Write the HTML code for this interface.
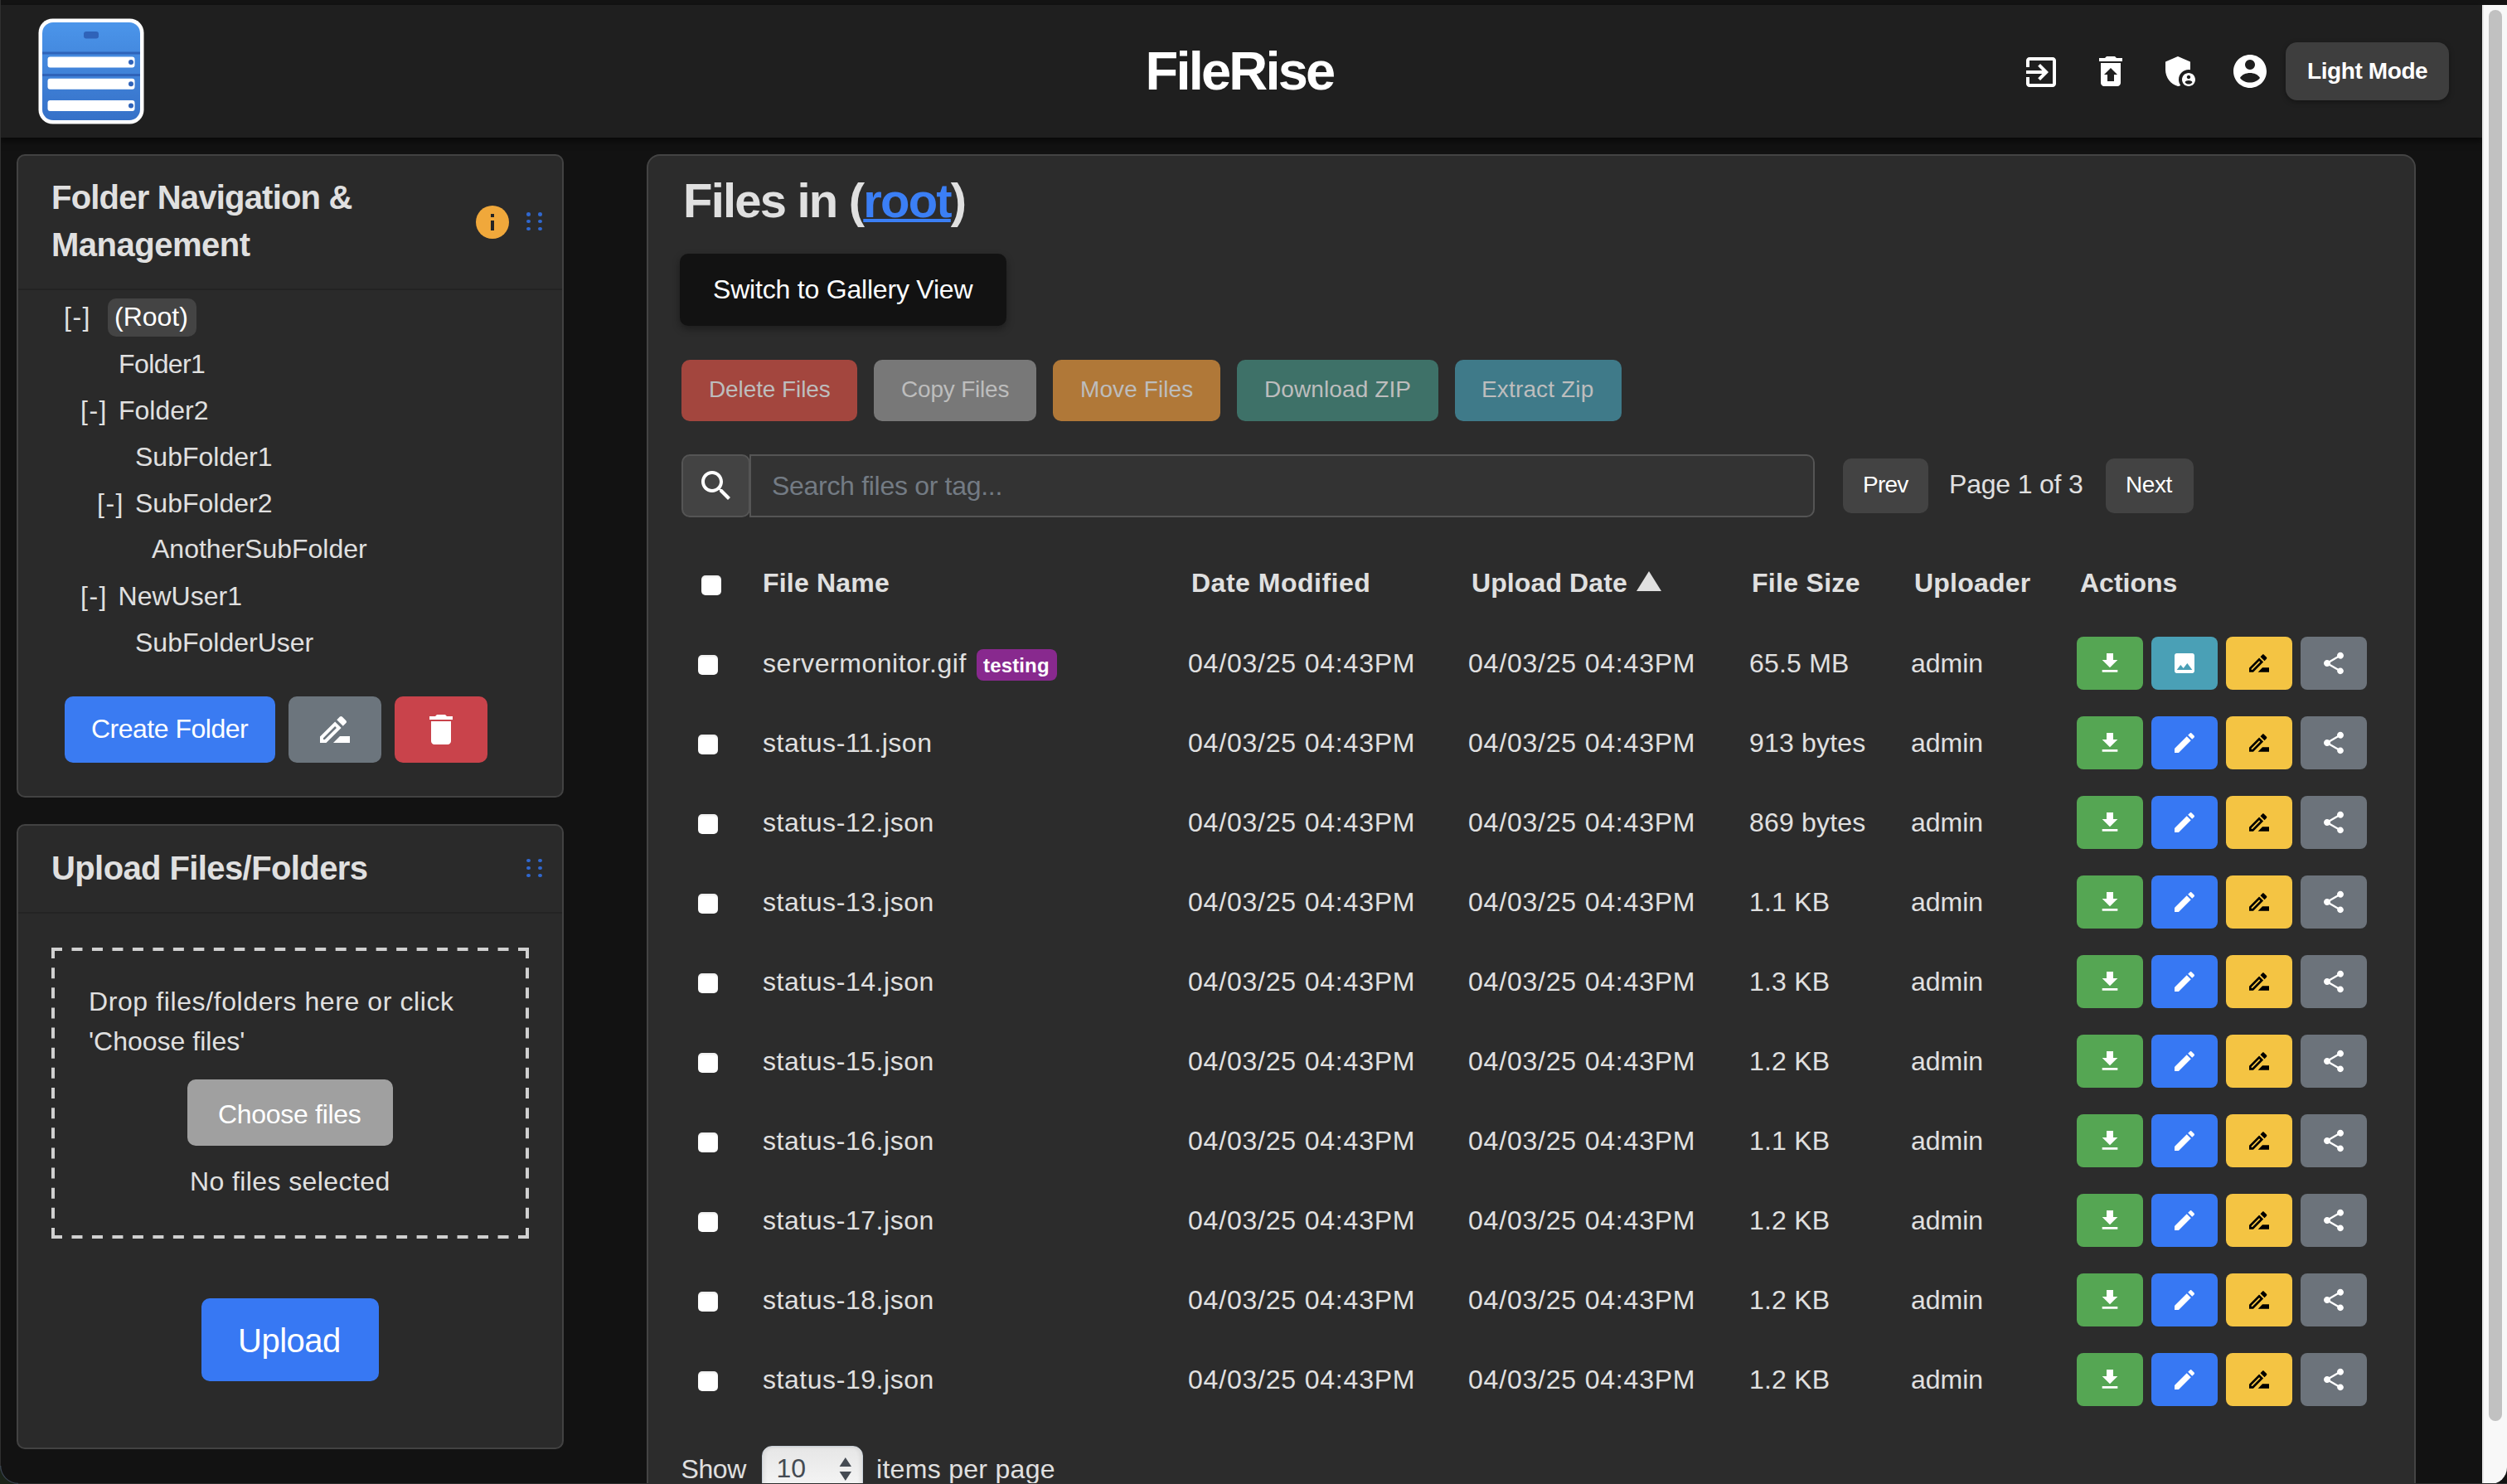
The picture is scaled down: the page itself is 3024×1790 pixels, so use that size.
<!DOCTYPE html>
<html><head><meta charset="utf-8"><title>FileRise</title>
<style>
html,body{margin:0;padding:0;}
body{width:3024px;height:1790px;overflow:hidden;position:relative;background:#121212;font-family:"Liberation Sans",sans-serif;color:#e0e0e0;}
.t{position:absolute;line-height:1;white-space:pre;}
.r{position:absolute;}
</style></head><body>
<div class="r" style="left:0.0px;top:0.0px;width:3024.0px;height:6.0px;background:#141414;"></div>
<div class="r" style="left:0.0px;top:6.0px;width:2994.0px;height:160.0px;background:#1f1f1f;box-shadow:0 4px 8px rgba(0,0,0,.6);z-index:2"></div>
<div class="r" style="left:0.0px;top:0.0px;width:1.0px;height:1790.0px;background:#303030;z-index:5"></div>
<svg class="r" style="left:46px;top:22px;width:128px;height:128px;z-index:3" viewBox="0 0 128 128">
<defs><linearGradient id="lg" x1="0" y1="0" x2="0" y2="1"><stop offset="0" stop-color="#4b95ea"/><stop offset="1" stop-color="#3671c8"/></linearGradient></defs>
<rect x="0.5" y="0.5" width="127" height="127" rx="17" fill="#fff"/>
<rect x="5" y="5" width="118" height="118" rx="13" fill="url(#lg)"/>
<rect x="55" y="16" width="18" height="8.5" rx="3" fill="#2f63b9"/>
<rect x="5" y="40.5" width="118" height="3" fill="#2f63b9"/>
<rect x="5" y="67" width="118" height="3" fill="#2f63b9"/>
<rect x="11.5" y="46.5" width="105" height="13" rx="3" fill="#fff"/>
<rect x="11.5" y="72.7" width="105" height="13" rx="3" fill="#fff"/>
<rect x="11.5" y="99" width="105" height="13" rx="3" fill="#fff"/>
<circle cx="112" cy="53" r="3" fill="#2f63b9"/><circle cx="112" cy="79.2" r="3" fill="#2f63b9"/><circle cx="112" cy="105.5" r="3" fill="#2f63b9"/>
</svg>
<div class="t" style="left:1381.5px;top:53.4px;font-size:65px;font-weight:700;color:#ffffff;letter-spacing:-2.8px;z-index:3;">FileRise</div>
<svg class="r" style="left:2438px;top:63px;width:48px;height:48px;fill:#fff;z-index:3" viewBox="0 0 24 24"><path d="M10.09 15.59L11.5 17l5-5-5-5-1.41 1.41L12.67 11H3v2h9.67l-2.58 2.59zM19 3H5c-1.11 0-2 .9-2 2v4h2V5h14v14H5v-4H3v4c0 1.1.89 2 2 2h14c1.1 0 2-.9 2-2V5c0-1.1-.9-2-2-2z"/></svg>
<svg class="r" style="left:2522px;top:62px;width:48px;height:48px;fill:#fff;z-index:3" viewBox="0 0 24 24"><path d="M19 4h-3.5l-1-1h-5l-1 1H5v2h14V4zM6 7v12c0 1.1.9 2 2 2h8c1.1 0 2-.9 2-2V7H6zm8 7v4h-4v-4H8l4-4 4 4h-2z"/></svg>
<svg class="r" style="left:2606px;top:62px;width:48px;height:48px;fill:#fff;z-index:3" viewBox="0 0 24 24"><path d="M17,11c0.34,0,0.67,0.04,1,0.09V6.27L10.5,3L3,6.27v4.91c0,4.54,3.2,8.79,7.5,9.82c0.55-0.13,1.08-0.32,1.6-0.55C11.41,19.47,11,18.28,11,17C11,13.69,13.69,11,17,11z"/><path d="M17,13c-2.21,0-4,1.79-4,4c0,2.21,1.79,4,4,4s4-1.79,4-4C21,14.79,19.21,13,17,13z M17,14.38c0.62,0,1.12,0.51,1.12,1.12s-0.51,1.12-1.12,1.12s-1.12-0.51-1.12-1.12S16.38,14.38,17,14.38z M17,19.75c-0.93,0-1.740-0.46-2.24-1.17c0.05-0.72,1.51-1.08,2.24-1.08s2.19,0.36,2.24,1.08C18.74,19.29,17.93,19.75,17,19.75z"/></svg>
<svg class="r" style="left:2690px;top:62px;width:48px;height:48px;fill:#fff;z-index:3" viewBox="0 0 24 24"><path fill-rule="evenodd" d="M12 2C6.48 2 2 6.48 2 12s4.48 10 10 10 10-4.48 10-10S17.520 2 12 2zM12 5a3 3 0 1 0 0.001 0zM6 16c1-2 3.6-3 6-3s5 1 6 3c-1.2 1.7-3.5 2.8-6 2.8S7.2 17.7 6 16z"/></svg>
<div class="r" style="left:2757.0px;top:51.0px;width:197.0px;height:70.0px;background:#3e3e3e;border-radius:14px;box-shadow:0 2px 6px rgba(0,0,0,.35);z-index:3"></div>
<div class="t" style="left:2783.0px;top:71.6px;font-size:28px;font-weight:700;color:#ffffff;letter-spacing:-0.4px;z-index:3;">Light Mode</div>
<div class="r" style="left:2994.0px;top:6.0px;width:30.0px;height:1784.0px;background:#f8f8f8;border-left:2px solid #e8e8e8;box-sizing:border-box;border-bottom-right-radius:20px;z-index:6"></div>
<div class="r" style="left:3002.0px;top:12.0px;width:16.0px;height:1702.0px;background:#c1c1c1;border-radius:8px;z-index:7"></div>
<div class="r" style="left:0.0px;top:1788.5px;width:3024.0px;height:1.5px;background:#2e2e2e;z-index:8"></div>
<svg class="r" style="left:0;top:1768px;width:22px;height:22px;z-index:9" viewBox="0 0 22 22"><path d="M0,0 L0,22 L22,22 A22,22 0 0 1 0,0 Z" fill="#1b2419"/><path d="M22,21.3 A21.3,21.3 0 0 1 0.7,0" fill="none" stroke="#3b4652" stroke-width="1.2"/></svg>
<div class="r" style="left:20.0px;top:186.0px;width:660.0px;height:776.0px;background:#2a2a2a;border-radius:10px;border:2px solid #424242;box-sizing:border-box"></div>
<div class="r" style="left:22.0px;top:348.0px;width:656.0px;height:2.0px;background:#232323;"></div>
<div class="t" style="left:62.0px;top:218.1px;font-size:40px;font-weight:700;letter-spacing:-0.8px;">Folder Navigation &amp;</div>
<div class="t" style="left:62.0px;top:274.7px;font-size:40px;font-weight:700;letter-spacing:-0.5px;">Management</div>
<div class="r" style="left:574px;top:248px;width:40px;height:40px;border-radius:50%;background:#f0a83b"></div>
<div class="r" style="left:592.0px;top:258.0px;width:4.0px;height:4.0px;background:#242424;"></div>
<div class="r" style="left:592.0px;top:266.0px;width:4.0px;height:12.0px;background:#242424;"></div>
<div class="r" style="left:634.5px;top:256.40000000000003px;width:5px;height:4.4px;border-radius:50%;background:#3068cf"></div>
<div class="r" style="left:634.5px;top:265.1px;width:5px;height:4.4px;border-radius:50%;background:#3068cf"></div>
<div class="r" style="left:634.5px;top:273.8px;width:5px;height:4.4px;border-radius:50%;background:#3068cf"></div>
<div class="r" style="left:648.5px;top:256.40000000000003px;width:5px;height:4.4px;border-radius:50%;background:#3068cf"></div>
<div class="r" style="left:648.5px;top:265.1px;width:5px;height:4.4px;border-radius:50%;background:#3068cf"></div>
<div class="r" style="left:648.5px;top:273.8px;width:5px;height:4.4px;border-radius:50%;background:#3068cf"></div>
<div class="r" style="left:130.0px;top:360.0px;width:107.0px;height:46.0px;background:#444444;border-radius:10px;"></div>
<div class="t" style="left:77.0px;top:365.9px;font-size:32px;letter-spacing:1.5px;">[-]</div>
<div class="t" style="left:138.0px;top:365.9px;font-size:32px;color:#ffffff;">(Root)</div>
<div class="t" style="left:143.0px;top:422.9px;font-size:32px;letter-spacing:-0.6px;">Folder1</div>
<div class="t" style="left:97.0px;top:478.9px;font-size:32px;letter-spacing:1.5px;">[-]</div>
<div class="t" style="left:143.0px;top:478.9px;font-size:32px;">Folder2</div>
<div class="t" style="left:163.0px;top:534.9px;font-size:32px;">SubFolder1</div>
<div class="t" style="left:117.0px;top:590.6px;font-size:32px;letter-spacing:1.5px;">[-]</div>
<div class="t" style="left:163.0px;top:590.6px;font-size:32px;">SubFolder2</div>
<div class="t" style="left:183.0px;top:645.9px;font-size:32px;">AnotherSubFolder</div>
<div class="t" style="left:97.0px;top:702.9px;font-size:32px;letter-spacing:1.5px;">[-]</div>
<div class="t" style="left:142.6px;top:702.9px;font-size:32px;">NewUser1</div>
<div class="t" style="left:163.0px;top:758.6px;font-size:32px;">SubFolderUser</div>
<div class="r" style="left:78.0px;top:840.0px;width:254.0px;height:80.0px;background:#3a7bf2;border-radius:10px;"></div>
<div class="t" style="left:110.0px;top:862.9px;font-size:32px;color:#ffffff;letter-spacing:-0.5px;">Create Folder</div>
<div class="r" style="left:348.0px;top:840.0px;width:112.0px;height:80.0px;background:#6c757d;border-radius:10px;"></div>
<svg class="r" style="left:380px;top:856px;width:48px;height:48px;fill:#fff" viewBox="0 0 24 24"><path d="M15 16l-4 4h10v-4zM12.06 7.19L3 16.25V20h3.75l9.06-9.06-3.75-3.75zM5.92 18H5v-.92l7.06-7.06.92.92L5.92 18zM18.71 8.04c.39-.39.39-1.02 0-1.41l-2.34-2.34c-.2-.2-.45-.29-.71-.29s-.51.1-.7.29l-1.83 1.83 3.75 3.75 1.83-1.83z"/></svg>
<div class="r" style="left:476.0px;top:840.0px;width:112.0px;height:80.0px;background:#c9434b;border-radius:10px;"></div>
<svg class="r" style="left:508px;top:856px;width:48px;height:48px;fill:#fff" viewBox="0 0 24 24"><path d="M6 19c0 1.1.9 2 2 2h8c1.1 0 2-.9 2-2V7H6v12zM19 4h-3.5l-1-1h-5l-1 1H5v2h14V4z"/></svg>
<div class="r" style="left:20.0px;top:994.0px;width:660.0px;height:754.0px;background:#2a2a2a;border-radius:10px;border:2px solid #424242;box-sizing:border-box"></div>
<div class="r" style="left:22.0px;top:1100.0px;width:656.0px;height:2.0px;background:#232323;"></div>
<div class="t" style="left:62.0px;top:1026.8px;font-size:40px;font-weight:700;letter-spacing:-0.6px;">Upload Files/Folders</div>
<div class="r" style="left:634.5px;top:1035.8px;width:5px;height:4.4px;border-radius:50%;background:#3068cf"></div>
<div class="r" style="left:634.5px;top:1044.8px;width:5px;height:4.4px;border-radius:50%;background:#3068cf"></div>
<div class="r" style="left:634.5px;top:1053.8px;width:5px;height:4.4px;border-radius:50%;background:#3068cf"></div>
<div class="r" style="left:648.5px;top:1035.8px;width:5px;height:4.4px;border-radius:50%;background:#3068cf"></div>
<div class="r" style="left:648.5px;top:1044.8px;width:5px;height:4.4px;border-radius:50%;background:#3068cf"></div>
<div class="r" style="left:648.5px;top:1053.8px;width:5px;height:4.4px;border-radius:50%;background:#3068cf"></div>
<svg class="r" style="left:0;top:0;width:3024px;height:1790px;overflow:visible" viewBox="0 0 3024 1790"><line x1="62" y1="1145.0" x2="638" y2="1145.0" stroke="#d0d0d0" stroke-width="4" stroke-dasharray="13 11.478"/><line x1="62" y1="1492.0" x2="638" y2="1492.0" stroke="#d0d0d0" stroke-width="4" stroke-dasharray="13 11.478"/><line x1="64.0" y1="1143" x2="64.0" y2="1494" stroke="#d0d0d0" stroke-width="4" stroke-dasharray="13 11.143"/><line x1="636.0" y1="1143" x2="636.0" y2="1494" stroke="#d0d0d0" stroke-width="4" stroke-dasharray="13 11.143"/></svg>
<div class="t" style="left:107.0px;top:1191.9px;font-size:32px;letter-spacing:0.6px;">Drop files/folders here or click</div>
<div class="t" style="left:107.0px;top:1239.9px;font-size:32px;">'Choose files'</div>
<div class="r" style="left:226.0px;top:1302.0px;width:248.0px;height:80.0px;background:#a0a0a0;border-radius:10px;"></div>
<div class="t" style="left:263.0px;top:1327.9px;font-size:32px;color:#ffffff;letter-spacing:-0.3px;">Choose files</div>
<div class="t" style="left:229.0px;top:1408.9px;font-size:32px;letter-spacing:0.4px;">No files selected</div>
<div class="r" style="left:243.0px;top:1566.0px;width:214.0px;height:100.0px;background:#3778f3;border-radius:10px;"></div>
<div class="t" style="left:287.0px;top:1597.1px;font-size:40px;color:#ffffff;letter-spacing:-0.5px;">Upload</div>
<div class="r" style="left:780.0px;top:186.0px;width:2134.0px;height:1714.0px;background:#2c2c2c;border-radius:16px;border:2px solid #444;box-sizing:border-box"></div>
<div class="t" style="left:824.0px;top:212.9px;font-size:58px;font-weight:700;letter-spacing:-1.8px;">Files in (<span style="color:#3b7ff5;text-decoration:underline;text-decoration-thickness:4px;text-underline-offset:2px">root</span>)</div>
<div class="r" style="left:820.0px;top:306.0px;width:394.0px;height:87.0px;background:#121212;border-radius:10px;box-shadow:0 4px 10px rgba(0,0,0,.35)"></div>
<div class="t" style="left:860.0px;top:332.9px;font-size:32px;color:#ffffff;letter-spacing:-0.2px;">Switch to Gallery View</div>
<div class="r" style="left:822.0px;top:434.0px;width:212.0px;height:74.0px;background:#a3463e;border-radius:10px;"></div>
<div class="t" style="left:855.0px;top:456.3px;font-size:28px;color:#bdbdbd;letter-spacing:-0.1px;">Delete Files</div>
<div class="r" style="left:1054.0px;top:434.0px;width:196.0px;height:74.0px;background:#787878;border-radius:10px;"></div>
<div class="t" style="left:1087.0px;top:456.3px;font-size:28px;color:#bdbdbd;letter-spacing:-0.2px;">Copy Files</div>
<div class="r" style="left:1270.0px;top:434.0px;width:202.0px;height:74.0px;background:#b07838;border-radius:10px;"></div>
<div class="t" style="left:1303.0px;top:456.3px;font-size:28px;color:#bdbdbd;letter-spacing:0.1px;">Move Files</div>
<div class="r" style="left:1492.0px;top:434.0px;width:243.0px;height:74.0px;background:#3e7168;border-radius:10px;"></div>
<div class="t" style="left:1525.0px;top:456.3px;font-size:28px;color:#bdbdbd;letter-spacing:0.1px;">Download ZIP</div>
<div class="r" style="left:1755.0px;top:434.0px;width:201.0px;height:74.0px;background:#3f7a89;border-radius:10px;"></div>
<div class="t" style="left:1787.0px;top:456.3px;font-size:28px;color:#bdbdbd;letter-spacing:0.15px;">Extract Zip</div>
<div class="r" style="left:822px;top:548px;width:83px;height:76px;background:#434343;border:2px solid #555555;border-radius:10px;box-sizing:border-box;z-index:1"></div>
<svg class="r" style="left:840px;top:562px;width:48px;height:48px;fill:#fff;z-index:2" viewBox="0 0 24 24"><path d="M15.5 14h-.79l-.28-.27C15.41 12.59 16 11.11 16 9.5 16 5.91 13.09 3 9.5 3S3 5.910 3 9.5 5.91 16 9.5 16c1.61 0 3.09-.59 4.23-1.57l.27.28v.79l5 4.99L20.49 19l-4.99-5zm-6 0C7.01 14 5 11.99 5 9.5S7.01 5 9.5 5 14 7.01 14 9.5 11.99 14 9.5 14z"/></svg>
<div class="r" style="left:904px;top:548px;width:1285px;height:76px;background:#333333;border:2px solid #555555;border-radius:0 10px 10px 0;box-sizing:border-box"></div>
<div class="t" style="left:931.0px;top:569.9px;font-size:32px;color:#737b84;letter-spacing:-0.3px;">Search files or tag...</div>
<div class="r" style="left:2223.0px;top:553.0px;width:103.0px;height:66.0px;background:#434343;border-radius:10px;"></div>
<div class="t" style="left:2247.0px;top:571.3px;font-size:28px;color:#ffffff;letter-spacing:-0.8px;">Prev</div>
<div class="t" style="left:2351.0px;top:567.9px;font-size:32px;letter-spacing:-0.2px;">Page 1 of 3</div>
<div class="r" style="left:2540.0px;top:553.0px;width:106.0px;height:66.0px;background:#434343;border-radius:10px;"></div>
<div class="t" style="left:2564.0px;top:571.3px;font-size:28px;color:#ffffff;letter-spacing:-0.4px;">Next</div>
<div class="r" style="left:846.0px;top:694.0px;width:24.0px;height:24.0px;background:#ffffff;border-radius:5px;box-shadow:inset 0 2px 2px rgba(0,0,0,.08)"></div>
<div class="t" style="left:920.0px;top:686.9px;font-size:32px;font-weight:700;letter-spacing:0.2px;">File Name</div>
<div class="t" style="left:1437.0px;top:686.9px;font-size:32px;font-weight:700;letter-spacing:0.5px;">Date Modified</div>
<div class="t" style="left:1775.0px;top:686.9px;font-size:32px;font-weight:700;letter-spacing:0.1px;">Upload Date</div>
<svg class="r" style="left:1973px;top:688px;width:32px;height:26px" viewBox="0 0 32 26"><path d="M16 1L31 25H1z" fill="#e0e0e0"/></svg>
<div class="t" style="left:2113.0px;top:686.9px;font-size:32px;font-weight:700;letter-spacing:0.3px;">File Size</div>
<div class="t" style="left:2309.0px;top:686.9px;font-size:32px;font-weight:700;letter-spacing:0.2px;">Uploader</div>
<div class="t" style="left:2509.0px;top:686.9px;font-size:32px;font-weight:700;">Actions</div>
<div class="r" style="left:842.0px;top:790.0px;width:24.0px;height:24.0px;background:#ffffff;border-radius:5px;box-shadow:inset 0 2px 2px rgba(0,0,0,.08)"></div>
<div class="t" style="left:920.0px;top:783.9px;font-size:32px;letter-spacing:0.55px;">servermonitor.gif</div>
<div class="r" style="left:1178.0px;top:783.0px;width:97.0px;height:38.0px;background:#88298e;border-radius:8px;"></div>
<div class="t" style="left:1186.0px;top:790.7px;font-size:24px;font-weight:700;color:#ffffff;letter-spacing:0.15px;">testing</div>
<div class="t" style="left:1433.0px;top:783.9px;font-size:32px;letter-spacing:0.8px;">04/03/25 04:43PM</div>
<div class="t" style="left:1771.0px;top:783.9px;font-size:32px;letter-spacing:0.8px;">04/03/25 04:43PM</div>
<div class="t" style="left:2110.0px;top:783.9px;font-size:32px;letter-spacing:0.2px;">65.5 MB</div>
<div class="t" style="left:2305.0px;top:783.9px;font-size:32px;">admin</div>
<div class="r" style="left:2505.0px;top:768.0px;width:80.0px;height:64.0px;background:#55a653;border-radius:8px;"></div>
<svg class="r" style="left:2529px;top:784px;width:32px;height:32px;fill:#fff" viewBox="0 0 24 24"><path d="M19 9h-4V3H9v6H5l7 7 7-7zM5 18v2h14v-2H5z"/></svg>
<div class="r" style="left:2595.0px;top:768.0px;width:80.0px;height:64.0px;background:#4aa0b6;border-radius:8px;"></div>
<svg class="r" style="left:2619px;top:784px;width:32px;height:32px;fill:#fff" viewBox="0 0 24 24"><path fill-rule="evenodd" d="M21 19V5c0-1.1-.9-2-2-2H5c-1.1 0-2 .9-2 2v14c0 1.1.9 2 2 2h14c1.1 0 2-.9 2-2zM8.5 13.5l2.5 3.01L14.5 12l4.5 6H5l3.5-4.5z"/></svg>
<div class="r" style="left:2685.0px;top:768.0px;width:80.0px;height:64.0px;background:#f4c443;border-radius:8px;"></div>
<svg class="r" style="left:2709px;top:784px;width:32px;height:32px;fill:#000" viewBox="0 0 24 24"><path d="M15 16l-4 4h10v-4zM12.06 7.19L3 16.25V20h3.75l9.06-9.06-3.75-3.75zM5.92 18H5v-.92l7.06-7.06.92.92L5.92 18zM18.71 8.04c.39-.39.39-1.02 0-1.41l-2.34-2.34c-.2-.2-.45-.29-.71-.29s-.51.1-.7.29l-1.83 1.83 3.75 3.75 1.83-1.83z"/></svg>
<div class="r" style="left:2775.0px;top:768.0px;width:80.0px;height:64.0px;background:#6c737b;border-radius:8px;"></div>
<svg class="r" style="left:2799px;top:784px;width:32px;height:32px;fill:#fff" viewBox="0 0 24 24"><path d="M18 16.08c-.76 0-1.44.3-1.96.77L8.91 12.7c.05-.23.09-.46.09-.7s-.04-.47-.09-.7l7.05-4.11c.54.5 1.25.81 2.04.81 1.66 0 3-1.34 3-3s-1.34-3-3-3-3 1.34-3 3c0 .24.04.47.09.7L8.04 9.81C7.5 9.31 6.79 9 6 9c-1.66 0-3 1.34-3 3s1.34 3 3 3c.79 0 1.5-.31 2.04-.81l7.12 4.16c-.05.21-.08.43-.08.65 0 1.61 1.31 2.92 2.92 2.92 1.61 0 2.920-1.31 2.92-2.92s-1.31-2.92-2.92-2.92z"/></svg>
<div class="r" style="left:842.0px;top:886.0px;width:24.0px;height:24.0px;background:#ffffff;border-radius:5px;box-shadow:inset 0 2px 2px rgba(0,0,0,.08)"></div>
<div class="t" style="left:920.0px;top:879.9px;font-size:32px;letter-spacing:0.55px;">status-11.json</div>
<div class="t" style="left:1433.0px;top:879.9px;font-size:32px;letter-spacing:0.8px;">04/03/25 04:43PM</div>
<div class="t" style="left:1771.0px;top:879.9px;font-size:32px;letter-spacing:0.8px;">04/03/25 04:43PM</div>
<div class="t" style="left:2110.0px;top:879.9px;font-size:32px;letter-spacing:0.2px;">913 bytes</div>
<div class="t" style="left:2305.0px;top:879.9px;font-size:32px;">admin</div>
<div class="r" style="left:2505.0px;top:864.0px;width:80.0px;height:64.0px;background:#55a653;border-radius:8px;"></div>
<svg class="r" style="left:2529px;top:880px;width:32px;height:32px;fill:#fff" viewBox="0 0 24 24"><path d="M19 9h-4V3H9v6H5l7 7 7-7zM5 18v2h14v-2H5z"/></svg>
<div class="r" style="left:2595.0px;top:864.0px;width:80.0px;height:64.0px;background:#3778f3;border-radius:8px;"></div>
<svg class="r" style="left:2619px;top:880px;width:32px;height:32px;fill:#fff" viewBox="0 0 24 24"><path d="M3 17.25V21h3.75L17.81 9.94l-3.75-3.75L3 17.25zM20.71 7.04c.39-.39.39-1.02 0-1.41l-2.34-2.34c-.39-.39-1.02-.39-1.41 0l-1.830 1.83 3.75 3.75 1.83-1.83z"/></svg>
<div class="r" style="left:2685.0px;top:864.0px;width:80.0px;height:64.0px;background:#f4c443;border-radius:8px;"></div>
<svg class="r" style="left:2709px;top:880px;width:32px;height:32px;fill:#000" viewBox="0 0 24 24"><path d="M15 16l-4 4h10v-4zM12.06 7.19L3 16.25V20h3.75l9.06-9.06-3.75-3.75zM5.92 18H5v-.92l7.06-7.06.92.92L5.92 18zM18.71 8.04c.39-.39.39-1.02 0-1.41l-2.34-2.34c-.2-.2-.45-.29-.71-.29s-.51.1-.7.29l-1.83 1.83 3.75 3.75 1.83-1.83z"/></svg>
<div class="r" style="left:2775.0px;top:864.0px;width:80.0px;height:64.0px;background:#6c737b;border-radius:8px;"></div>
<svg class="r" style="left:2799px;top:880px;width:32px;height:32px;fill:#fff" viewBox="0 0 24 24"><path d="M18 16.08c-.76 0-1.44.3-1.96.77L8.91 12.7c.05-.23.09-.46.09-.7s-.04-.47-.09-.7l7.05-4.11c.54.5 1.25.81 2.04.81 1.66 0 3-1.34 3-3s-1.34-3-3-3-3 1.34-3 3c0 .24.04.47.09.7L8.04 9.81C7.5 9.31 6.79 9 6 9c-1.66 0-3 1.34-3 3s1.34 3 3 3c.79 0 1.5-.31 2.04-.81l7.12 4.16c-.05.21-.08.43-.08.65 0 1.61 1.31 2.92 2.92 2.92 1.61 0 2.920-1.31 2.92-2.92s-1.31-2.92-2.92-2.92z"/></svg>
<div class="r" style="left:842.0px;top:982.0px;width:24.0px;height:24.0px;background:#ffffff;border-radius:5px;box-shadow:inset 0 2px 2px rgba(0,0,0,.08)"></div>
<div class="t" style="left:920.0px;top:975.9px;font-size:32px;letter-spacing:0.55px;">status-12.json</div>
<div class="t" style="left:1433.0px;top:975.9px;font-size:32px;letter-spacing:0.8px;">04/03/25 04:43PM</div>
<div class="t" style="left:1771.0px;top:975.9px;font-size:32px;letter-spacing:0.8px;">04/03/25 04:43PM</div>
<div class="t" style="left:2110.0px;top:975.9px;font-size:32px;letter-spacing:0.2px;">869 bytes</div>
<div class="t" style="left:2305.0px;top:975.9px;font-size:32px;">admin</div>
<div class="r" style="left:2505.0px;top:960.0px;width:80.0px;height:64.0px;background:#55a653;border-radius:8px;"></div>
<svg class="r" style="left:2529px;top:976px;width:32px;height:32px;fill:#fff" viewBox="0 0 24 24"><path d="M19 9h-4V3H9v6H5l7 7 7-7zM5 18v2h14v-2H5z"/></svg>
<div class="r" style="left:2595.0px;top:960.0px;width:80.0px;height:64.0px;background:#3778f3;border-radius:8px;"></div>
<svg class="r" style="left:2619px;top:976px;width:32px;height:32px;fill:#fff" viewBox="0 0 24 24"><path d="M3 17.25V21h3.75L17.81 9.94l-3.75-3.75L3 17.25zM20.71 7.04c.39-.39.39-1.02 0-1.41l-2.34-2.34c-.39-.39-1.02-.39-1.41 0l-1.830 1.83 3.75 3.75 1.83-1.83z"/></svg>
<div class="r" style="left:2685.0px;top:960.0px;width:80.0px;height:64.0px;background:#f4c443;border-radius:8px;"></div>
<svg class="r" style="left:2709px;top:976px;width:32px;height:32px;fill:#000" viewBox="0 0 24 24"><path d="M15 16l-4 4h10v-4zM12.06 7.19L3 16.25V20h3.75l9.06-9.06-3.75-3.75zM5.92 18H5v-.92l7.06-7.06.92.92L5.92 18zM18.71 8.04c.39-.39.39-1.02 0-1.41l-2.34-2.34c-.2-.2-.45-.29-.71-.29s-.51.1-.7.29l-1.83 1.83 3.75 3.75 1.83-1.83z"/></svg>
<div class="r" style="left:2775.0px;top:960.0px;width:80.0px;height:64.0px;background:#6c737b;border-radius:8px;"></div>
<svg class="r" style="left:2799px;top:976px;width:32px;height:32px;fill:#fff" viewBox="0 0 24 24"><path d="M18 16.08c-.76 0-1.44.3-1.96.77L8.91 12.7c.05-.23.09-.46.09-.7s-.04-.47-.09-.7l7.05-4.11c.54.5 1.25.81 2.04.81 1.66 0 3-1.34 3-3s-1.34-3-3-3-3 1.34-3 3c0 .24.04.47.09.7L8.04 9.81C7.5 9.31 6.79 9 6 9c-1.66 0-3 1.34-3 3s1.34 3 3 3c.79 0 1.5-.31 2.04-.81l7.12 4.16c-.05.21-.08.43-.08.65 0 1.61 1.31 2.92 2.92 2.92 1.61 0 2.920-1.31 2.92-2.92s-1.31-2.92-2.92-2.92z"/></svg>
<div class="r" style="left:842.0px;top:1078.0px;width:24.0px;height:24.0px;background:#ffffff;border-radius:5px;box-shadow:inset 0 2px 2px rgba(0,0,0,.08)"></div>
<div class="t" style="left:920.0px;top:1071.9px;font-size:32px;letter-spacing:0.55px;">status-13.json</div>
<div class="t" style="left:1433.0px;top:1071.9px;font-size:32px;letter-spacing:0.8px;">04/03/25 04:43PM</div>
<div class="t" style="left:1771.0px;top:1071.9px;font-size:32px;letter-spacing:0.8px;">04/03/25 04:43PM</div>
<div class="t" style="left:2110.0px;top:1071.9px;font-size:32px;letter-spacing:0.2px;">1.1 KB</div>
<div class="t" style="left:2305.0px;top:1071.9px;font-size:32px;">admin</div>
<div class="r" style="left:2505.0px;top:1056.0px;width:80.0px;height:64.0px;background:#55a653;border-radius:8px;"></div>
<svg class="r" style="left:2529px;top:1072px;width:32px;height:32px;fill:#fff" viewBox="0 0 24 24"><path d="M19 9h-4V3H9v6H5l7 7 7-7zM5 18v2h14v-2H5z"/></svg>
<div class="r" style="left:2595.0px;top:1056.0px;width:80.0px;height:64.0px;background:#3778f3;border-radius:8px;"></div>
<svg class="r" style="left:2619px;top:1072px;width:32px;height:32px;fill:#fff" viewBox="0 0 24 24"><path d="M3 17.25V21h3.75L17.81 9.94l-3.75-3.75L3 17.25zM20.71 7.04c.39-.39.39-1.02 0-1.41l-2.34-2.34c-.39-.39-1.02-.39-1.41 0l-1.830 1.83 3.75 3.75 1.83-1.83z"/></svg>
<div class="r" style="left:2685.0px;top:1056.0px;width:80.0px;height:64.0px;background:#f4c443;border-radius:8px;"></div>
<svg class="r" style="left:2709px;top:1072px;width:32px;height:32px;fill:#000" viewBox="0 0 24 24"><path d="M15 16l-4 4h10v-4zM12.06 7.19L3 16.25V20h3.75l9.06-9.06-3.75-3.75zM5.92 18H5v-.92l7.06-7.06.92.92L5.92 18zM18.71 8.04c.39-.39.39-1.02 0-1.41l-2.34-2.34c-.2-.2-.45-.29-.71-.29s-.51.1-.7.29l-1.83 1.83 3.75 3.75 1.83-1.83z"/></svg>
<div class="r" style="left:2775.0px;top:1056.0px;width:80.0px;height:64.0px;background:#6c737b;border-radius:8px;"></div>
<svg class="r" style="left:2799px;top:1072px;width:32px;height:32px;fill:#fff" viewBox="0 0 24 24"><path d="M18 16.08c-.76 0-1.44.3-1.96.77L8.91 12.7c.05-.23.09-.46.09-.7s-.04-.47-.09-.7l7.05-4.11c.54.5 1.25.81 2.04.81 1.66 0 3-1.34 3-3s-1.34-3-3-3-3 1.34-3 3c0 .24.04.47.09.7L8.04 9.81C7.5 9.31 6.79 9 6 9c-1.66 0-3 1.34-3 3s1.34 3 3 3c.79 0 1.5-.31 2.04-.81l7.12 4.16c-.05.21-.08.43-.08.65 0 1.61 1.31 2.92 2.92 2.92 1.61 0 2.920-1.31 2.92-2.92s-1.31-2.92-2.92-2.92z"/></svg>
<div class="r" style="left:842.0px;top:1174.0px;width:24.0px;height:24.0px;background:#ffffff;border-radius:5px;box-shadow:inset 0 2px 2px rgba(0,0,0,.08)"></div>
<div class="t" style="left:920.0px;top:1167.9px;font-size:32px;letter-spacing:0.55px;">status-14.json</div>
<div class="t" style="left:1433.0px;top:1167.9px;font-size:32px;letter-spacing:0.8px;">04/03/25 04:43PM</div>
<div class="t" style="left:1771.0px;top:1167.9px;font-size:32px;letter-spacing:0.8px;">04/03/25 04:43PM</div>
<div class="t" style="left:2110.0px;top:1167.9px;font-size:32px;letter-spacing:0.2px;">1.3 KB</div>
<div class="t" style="left:2305.0px;top:1167.9px;font-size:32px;">admin</div>
<div class="r" style="left:2505.0px;top:1152.0px;width:80.0px;height:64.0px;background:#55a653;border-radius:8px;"></div>
<svg class="r" style="left:2529px;top:1168px;width:32px;height:32px;fill:#fff" viewBox="0 0 24 24"><path d="M19 9h-4V3H9v6H5l7 7 7-7zM5 18v2h14v-2H5z"/></svg>
<div class="r" style="left:2595.0px;top:1152.0px;width:80.0px;height:64.0px;background:#3778f3;border-radius:8px;"></div>
<svg class="r" style="left:2619px;top:1168px;width:32px;height:32px;fill:#fff" viewBox="0 0 24 24"><path d="M3 17.25V21h3.75L17.81 9.94l-3.75-3.75L3 17.25zM20.71 7.04c.39-.39.39-1.02 0-1.41l-2.34-2.34c-.39-.39-1.02-.39-1.41 0l-1.830 1.83 3.75 3.75 1.83-1.83z"/></svg>
<div class="r" style="left:2685.0px;top:1152.0px;width:80.0px;height:64.0px;background:#f4c443;border-radius:8px;"></div>
<svg class="r" style="left:2709px;top:1168px;width:32px;height:32px;fill:#000" viewBox="0 0 24 24"><path d="M15 16l-4 4h10v-4zM12.06 7.19L3 16.25V20h3.75l9.06-9.06-3.75-3.75zM5.92 18H5v-.92l7.06-7.06.92.92L5.92 18zM18.71 8.04c.39-.39.39-1.02 0-1.41l-2.34-2.34c-.2-.2-.45-.29-.71-.29s-.51.1-.7.29l-1.83 1.83 3.75 3.75 1.83-1.83z"/></svg>
<div class="r" style="left:2775.0px;top:1152.0px;width:80.0px;height:64.0px;background:#6c737b;border-radius:8px;"></div>
<svg class="r" style="left:2799px;top:1168px;width:32px;height:32px;fill:#fff" viewBox="0 0 24 24"><path d="M18 16.08c-.76 0-1.44.3-1.96.77L8.91 12.7c.05-.23.09-.46.09-.7s-.04-.47-.09-.7l7.05-4.11c.54.5 1.25.81 2.04.81 1.66 0 3-1.34 3-3s-1.34-3-3-3-3 1.34-3 3c0 .24.04.47.09.7L8.04 9.81C7.5 9.31 6.79 9 6 9c-1.66 0-3 1.34-3 3s1.34 3 3 3c.79 0 1.5-.31 2.04-.81l7.12 4.16c-.05.21-.08.43-.08.65 0 1.61 1.31 2.92 2.92 2.92 1.61 0 2.920-1.31 2.92-2.92s-1.31-2.92-2.92-2.92z"/></svg>
<div class="r" style="left:842.0px;top:1270.0px;width:24.0px;height:24.0px;background:#ffffff;border-radius:5px;box-shadow:inset 0 2px 2px rgba(0,0,0,.08)"></div>
<div class="t" style="left:920.0px;top:1263.9px;font-size:32px;letter-spacing:0.55px;">status-15.json</div>
<div class="t" style="left:1433.0px;top:1263.9px;font-size:32px;letter-spacing:0.8px;">04/03/25 04:43PM</div>
<div class="t" style="left:1771.0px;top:1263.9px;font-size:32px;letter-spacing:0.8px;">04/03/25 04:43PM</div>
<div class="t" style="left:2110.0px;top:1263.9px;font-size:32px;letter-spacing:0.2px;">1.2 KB</div>
<div class="t" style="left:2305.0px;top:1263.9px;font-size:32px;">admin</div>
<div class="r" style="left:2505.0px;top:1248.0px;width:80.0px;height:64.0px;background:#55a653;border-radius:8px;"></div>
<svg class="r" style="left:2529px;top:1264px;width:32px;height:32px;fill:#fff" viewBox="0 0 24 24"><path d="M19 9h-4V3H9v6H5l7 7 7-7zM5 18v2h14v-2H5z"/></svg>
<div class="r" style="left:2595.0px;top:1248.0px;width:80.0px;height:64.0px;background:#3778f3;border-radius:8px;"></div>
<svg class="r" style="left:2619px;top:1264px;width:32px;height:32px;fill:#fff" viewBox="0 0 24 24"><path d="M3 17.25V21h3.75L17.81 9.94l-3.75-3.75L3 17.25zM20.71 7.04c.39-.39.39-1.02 0-1.41l-2.34-2.34c-.39-.39-1.02-.39-1.41 0l-1.830 1.83 3.75 3.75 1.83-1.83z"/></svg>
<div class="r" style="left:2685.0px;top:1248.0px;width:80.0px;height:64.0px;background:#f4c443;border-radius:8px;"></div>
<svg class="r" style="left:2709px;top:1264px;width:32px;height:32px;fill:#000" viewBox="0 0 24 24"><path d="M15 16l-4 4h10v-4zM12.06 7.19L3 16.25V20h3.75l9.06-9.06-3.75-3.75zM5.92 18H5v-.92l7.06-7.06.92.92L5.92 18zM18.71 8.04c.39-.39.39-1.02 0-1.41l-2.34-2.34c-.2-.2-.45-.29-.71-.29s-.51.1-.7.29l-1.83 1.83 3.75 3.75 1.83-1.83z"/></svg>
<div class="r" style="left:2775.0px;top:1248.0px;width:80.0px;height:64.0px;background:#6c737b;border-radius:8px;"></div>
<svg class="r" style="left:2799px;top:1264px;width:32px;height:32px;fill:#fff" viewBox="0 0 24 24"><path d="M18 16.08c-.76 0-1.44.3-1.96.77L8.91 12.7c.05-.23.09-.46.09-.7s-.04-.47-.09-.7l7.05-4.11c.54.5 1.25.81 2.04.81 1.66 0 3-1.34 3-3s-1.34-3-3-3-3 1.34-3 3c0 .24.04.47.09.7L8.04 9.81C7.5 9.31 6.79 9 6 9c-1.66 0-3 1.34-3 3s1.34 3 3 3c.79 0 1.5-.31 2.04-.81l7.12 4.16c-.05.21-.08.43-.08.65 0 1.61 1.31 2.92 2.92 2.92 1.61 0 2.920-1.31 2.92-2.92s-1.31-2.92-2.92-2.92z"/></svg>
<div class="r" style="left:842.0px;top:1366.0px;width:24.0px;height:24.0px;background:#ffffff;border-radius:5px;box-shadow:inset 0 2px 2px rgba(0,0,0,.08)"></div>
<div class="t" style="left:920.0px;top:1359.9px;font-size:32px;letter-spacing:0.55px;">status-16.json</div>
<div class="t" style="left:1433.0px;top:1359.9px;font-size:32px;letter-spacing:0.8px;">04/03/25 04:43PM</div>
<div class="t" style="left:1771.0px;top:1359.9px;font-size:32px;letter-spacing:0.8px;">04/03/25 04:43PM</div>
<div class="t" style="left:2110.0px;top:1359.9px;font-size:32px;letter-spacing:0.2px;">1.1 KB</div>
<div class="t" style="left:2305.0px;top:1359.9px;font-size:32px;">admin</div>
<div class="r" style="left:2505.0px;top:1344.0px;width:80.0px;height:64.0px;background:#55a653;border-radius:8px;"></div>
<svg class="r" style="left:2529px;top:1360px;width:32px;height:32px;fill:#fff" viewBox="0 0 24 24"><path d="M19 9h-4V3H9v6H5l7 7 7-7zM5 18v2h14v-2H5z"/></svg>
<div class="r" style="left:2595.0px;top:1344.0px;width:80.0px;height:64.0px;background:#3778f3;border-radius:8px;"></div>
<svg class="r" style="left:2619px;top:1360px;width:32px;height:32px;fill:#fff" viewBox="0 0 24 24"><path d="M3 17.25V21h3.75L17.81 9.94l-3.75-3.75L3 17.25zM20.71 7.04c.39-.39.39-1.02 0-1.41l-2.34-2.34c-.39-.39-1.02-.39-1.41 0l-1.830 1.83 3.75 3.75 1.83-1.83z"/></svg>
<div class="r" style="left:2685.0px;top:1344.0px;width:80.0px;height:64.0px;background:#f4c443;border-radius:8px;"></div>
<svg class="r" style="left:2709px;top:1360px;width:32px;height:32px;fill:#000" viewBox="0 0 24 24"><path d="M15 16l-4 4h10v-4zM12.06 7.19L3 16.25V20h3.75l9.06-9.06-3.75-3.75zM5.92 18H5v-.92l7.06-7.06.92.92L5.92 18zM18.71 8.04c.39-.39.39-1.02 0-1.41l-2.34-2.34c-.2-.2-.45-.29-.71-.29s-.51.1-.7.29l-1.83 1.83 3.75 3.75 1.83-1.83z"/></svg>
<div class="r" style="left:2775.0px;top:1344.0px;width:80.0px;height:64.0px;background:#6c737b;border-radius:8px;"></div>
<svg class="r" style="left:2799px;top:1360px;width:32px;height:32px;fill:#fff" viewBox="0 0 24 24"><path d="M18 16.08c-.76 0-1.44.3-1.96.77L8.91 12.7c.05-.23.09-.46.09-.7s-.04-.47-.09-.7l7.05-4.11c.54.5 1.25.81 2.04.81 1.66 0 3-1.34 3-3s-1.34-3-3-3-3 1.34-3 3c0 .24.04.47.09.7L8.04 9.81C7.5 9.31 6.79 9 6 9c-1.66 0-3 1.34-3 3s1.34 3 3 3c.79 0 1.5-.31 2.04-.81l7.12 4.16c-.05.21-.08.43-.08.65 0 1.61 1.31 2.92 2.92 2.92 1.61 0 2.920-1.31 2.92-2.92s-1.31-2.92-2.92-2.92z"/></svg>
<div class="r" style="left:842.0px;top:1462.0px;width:24.0px;height:24.0px;background:#ffffff;border-radius:5px;box-shadow:inset 0 2px 2px rgba(0,0,0,.08)"></div>
<div class="t" style="left:920.0px;top:1455.9px;font-size:32px;letter-spacing:0.55px;">status-17.json</div>
<div class="t" style="left:1433.0px;top:1455.9px;font-size:32px;letter-spacing:0.8px;">04/03/25 04:43PM</div>
<div class="t" style="left:1771.0px;top:1455.9px;font-size:32px;letter-spacing:0.8px;">04/03/25 04:43PM</div>
<div class="t" style="left:2110.0px;top:1455.9px;font-size:32px;letter-spacing:0.2px;">1.2 KB</div>
<div class="t" style="left:2305.0px;top:1455.9px;font-size:32px;">admin</div>
<div class="r" style="left:2505.0px;top:1440.0px;width:80.0px;height:64.0px;background:#55a653;border-radius:8px;"></div>
<svg class="r" style="left:2529px;top:1456px;width:32px;height:32px;fill:#fff" viewBox="0 0 24 24"><path d="M19 9h-4V3H9v6H5l7 7 7-7zM5 18v2h14v-2H5z"/></svg>
<div class="r" style="left:2595.0px;top:1440.0px;width:80.0px;height:64.0px;background:#3778f3;border-radius:8px;"></div>
<svg class="r" style="left:2619px;top:1456px;width:32px;height:32px;fill:#fff" viewBox="0 0 24 24"><path d="M3 17.25V21h3.75L17.81 9.94l-3.75-3.75L3 17.25zM20.71 7.04c.39-.39.39-1.02 0-1.41l-2.34-2.34c-.39-.39-1.02-.39-1.41 0l-1.830 1.83 3.75 3.75 1.83-1.83z"/></svg>
<div class="r" style="left:2685.0px;top:1440.0px;width:80.0px;height:64.0px;background:#f4c443;border-radius:8px;"></div>
<svg class="r" style="left:2709px;top:1456px;width:32px;height:32px;fill:#000" viewBox="0 0 24 24"><path d="M15 16l-4 4h10v-4zM12.06 7.19L3 16.25V20h3.75l9.06-9.06-3.75-3.75zM5.92 18H5v-.92l7.06-7.06.92.92L5.92 18zM18.71 8.04c.39-.39.39-1.02 0-1.41l-2.34-2.34c-.2-.2-.45-.29-.71-.29s-.51.1-.7.29l-1.83 1.83 3.75 3.75 1.83-1.83z"/></svg>
<div class="r" style="left:2775.0px;top:1440.0px;width:80.0px;height:64.0px;background:#6c737b;border-radius:8px;"></div>
<svg class="r" style="left:2799px;top:1456px;width:32px;height:32px;fill:#fff" viewBox="0 0 24 24"><path d="M18 16.08c-.76 0-1.44.3-1.96.77L8.91 12.7c.05-.23.09-.46.09-.7s-.04-.47-.09-.7l7.05-4.11c.54.5 1.25.81 2.04.81 1.66 0 3-1.34 3-3s-1.34-3-3-3-3 1.34-3 3c0 .24.04.47.09.7L8.04 9.81C7.5 9.31 6.79 9 6 9c-1.66 0-3 1.34-3 3s1.34 3 3 3c.79 0 1.5-.31 2.04-.81l7.12 4.16c-.05.21-.08.43-.08.65 0 1.61 1.31 2.92 2.92 2.92 1.61 0 2.920-1.31 2.92-2.92s-1.31-2.92-2.92-2.92z"/></svg>
<div class="r" style="left:842.0px;top:1558.0px;width:24.0px;height:24.0px;background:#ffffff;border-radius:5px;box-shadow:inset 0 2px 2px rgba(0,0,0,.08)"></div>
<div class="t" style="left:920.0px;top:1551.9px;font-size:32px;letter-spacing:0.55px;">status-18.json</div>
<div class="t" style="left:1433.0px;top:1551.9px;font-size:32px;letter-spacing:0.8px;">04/03/25 04:43PM</div>
<div class="t" style="left:1771.0px;top:1551.9px;font-size:32px;letter-spacing:0.8px;">04/03/25 04:43PM</div>
<div class="t" style="left:2110.0px;top:1551.9px;font-size:32px;letter-spacing:0.2px;">1.2 KB</div>
<div class="t" style="left:2305.0px;top:1551.9px;font-size:32px;">admin</div>
<div class="r" style="left:2505.0px;top:1536.0px;width:80.0px;height:64.0px;background:#55a653;border-radius:8px;"></div>
<svg class="r" style="left:2529px;top:1552px;width:32px;height:32px;fill:#fff" viewBox="0 0 24 24"><path d="M19 9h-4V3H9v6H5l7 7 7-7zM5 18v2h14v-2H5z"/></svg>
<div class="r" style="left:2595.0px;top:1536.0px;width:80.0px;height:64.0px;background:#3778f3;border-radius:8px;"></div>
<svg class="r" style="left:2619px;top:1552px;width:32px;height:32px;fill:#fff" viewBox="0 0 24 24"><path d="M3 17.25V21h3.75L17.81 9.94l-3.75-3.75L3 17.25zM20.71 7.04c.39-.39.39-1.02 0-1.41l-2.34-2.34c-.39-.39-1.02-.39-1.41 0l-1.830 1.83 3.75 3.75 1.83-1.83z"/></svg>
<div class="r" style="left:2685.0px;top:1536.0px;width:80.0px;height:64.0px;background:#f4c443;border-radius:8px;"></div>
<svg class="r" style="left:2709px;top:1552px;width:32px;height:32px;fill:#000" viewBox="0 0 24 24"><path d="M15 16l-4 4h10v-4zM12.06 7.19L3 16.25V20h3.75l9.06-9.06-3.75-3.75zM5.92 18H5v-.92l7.06-7.06.92.92L5.92 18zM18.71 8.04c.39-.39.39-1.02 0-1.41l-2.34-2.34c-.2-.2-.45-.29-.71-.29s-.51.1-.7.29l-1.83 1.83 3.75 3.75 1.83-1.83z"/></svg>
<div class="r" style="left:2775.0px;top:1536.0px;width:80.0px;height:64.0px;background:#6c737b;border-radius:8px;"></div>
<svg class="r" style="left:2799px;top:1552px;width:32px;height:32px;fill:#fff" viewBox="0 0 24 24"><path d="M18 16.08c-.76 0-1.44.3-1.96.77L8.91 12.7c.05-.23.09-.46.09-.7s-.04-.47-.09-.7l7.05-4.11c.54.5 1.25.81 2.04.81 1.66 0 3-1.34 3-3s-1.34-3-3-3-3 1.34-3 3c0 .24.04.47.09.7L8.04 9.81C7.5 9.31 6.79 9 6 9c-1.66 0-3 1.34-3 3s1.34 3 3 3c.79 0 1.5-.31 2.04-.81l7.12 4.16c-.05.21-.08.43-.08.65 0 1.61 1.31 2.92 2.92 2.92 1.61 0 2.920-1.31 2.92-2.92s-1.31-2.92-2.92-2.92z"/></svg>
<div class="r" style="left:842.0px;top:1654.0px;width:24.0px;height:24.0px;background:#ffffff;border-radius:5px;box-shadow:inset 0 2px 2px rgba(0,0,0,.08)"></div>
<div class="t" style="left:920.0px;top:1647.9px;font-size:32px;letter-spacing:0.55px;">status-19.json</div>
<div class="t" style="left:1433.0px;top:1647.9px;font-size:32px;letter-spacing:0.8px;">04/03/25 04:43PM</div>
<div class="t" style="left:1771.0px;top:1647.9px;font-size:32px;letter-spacing:0.8px;">04/03/25 04:43PM</div>
<div class="t" style="left:2110.0px;top:1647.9px;font-size:32px;letter-spacing:0.2px;">1.2 KB</div>
<div class="t" style="left:2305.0px;top:1647.9px;font-size:32px;">admin</div>
<div class="r" style="left:2505.0px;top:1632.0px;width:80.0px;height:64.0px;background:#55a653;border-radius:8px;"></div>
<svg class="r" style="left:2529px;top:1648px;width:32px;height:32px;fill:#fff" viewBox="0 0 24 24"><path d="M19 9h-4V3H9v6H5l7 7 7-7zM5 18v2h14v-2H5z"/></svg>
<div class="r" style="left:2595.0px;top:1632.0px;width:80.0px;height:64.0px;background:#3778f3;border-radius:8px;"></div>
<svg class="r" style="left:2619px;top:1648px;width:32px;height:32px;fill:#fff" viewBox="0 0 24 24"><path d="M3 17.25V21h3.75L17.81 9.94l-3.75-3.75L3 17.25zM20.71 7.04c.39-.39.39-1.02 0-1.41l-2.34-2.34c-.39-.39-1.02-.39-1.41 0l-1.830 1.83 3.75 3.75 1.83-1.83z"/></svg>
<div class="r" style="left:2685.0px;top:1632.0px;width:80.0px;height:64.0px;background:#f4c443;border-radius:8px;"></div>
<svg class="r" style="left:2709px;top:1648px;width:32px;height:32px;fill:#000" viewBox="0 0 24 24"><path d="M15 16l-4 4h10v-4zM12.06 7.19L3 16.25V20h3.75l9.06-9.06-3.75-3.75zM5.92 18H5v-.92l7.06-7.06.92.92L5.92 18zM18.71 8.04c.39-.39.39-1.02 0-1.41l-2.34-2.34c-.2-.2-.45-.29-.71-.29s-.51.1-.7.29l-1.83 1.83 3.75 3.75 1.83-1.83z"/></svg>
<div class="r" style="left:2775.0px;top:1632.0px;width:80.0px;height:64.0px;background:#6c737b;border-radius:8px;"></div>
<svg class="r" style="left:2799px;top:1648px;width:32px;height:32px;fill:#fff" viewBox="0 0 24 24"><path d="M18 16.08c-.76 0-1.44.3-1.96.77L8.91 12.7c.05-.23.09-.46.09-.7s-.04-.47-.09-.7l7.05-4.11c.54.5 1.25.81 2.04.81 1.66 0 3-1.34 3-3s-1.34-3-3-3-3 1.34-3 3c0 .24.04.47.09.7L8.04 9.81C7.5 9.31 6.79 9 6 9c-1.66 0-3 1.34-3 3s1.34 3 3 3c.79 0 1.5-.31 2.04-.81l7.12 4.16c-.05.21-.08.43-.08.65 0 1.61 1.31 2.92 2.92 2.92 1.61 0 2.920-1.31 2.92-2.92s-1.31-2.92-2.92-2.92z"/></svg>
<div class="t" style="left:821.5px;top:1755.9px;font-size:32px;letter-spacing:-0.4px;">Show</div>
<div class="r" style="left:919px;top:1744px;width:122px;height:80px;background:linear-gradient(#e6e6e6,#f4f4f4 60%,#fafafa);border:1.5px solid #c9d1d9;border-radius:12px;box-sizing:border-box;box-shadow:inset 3px 0 4px rgba(0,0,0,.06),inset -3px 0 4px rgba(0,0,0,.06)"></div>
<div class="t" style="left:936.5px;top:1754.9px;font-size:32px;color:#454b53;">10</div>
<svg class="r" style="left:1012px;top:1757px;width:16px;height:30px" viewBox="0 0 16 30"><path d="M7.8 1L15 12H0.6z M0.6 18H15L7.8 29z" fill="#454b53"/></svg>
<div class="t" style="left:1057.0px;top:1755.9px;font-size:32px;letter-spacing:0.3px;">items per page</div>
<script>(function(){var w=window.innerWidth;if(w&&Math.abs(w-3024)>2){var z=w/3024;document.body.style.zoom=z;}})();</script>
</body></html>
